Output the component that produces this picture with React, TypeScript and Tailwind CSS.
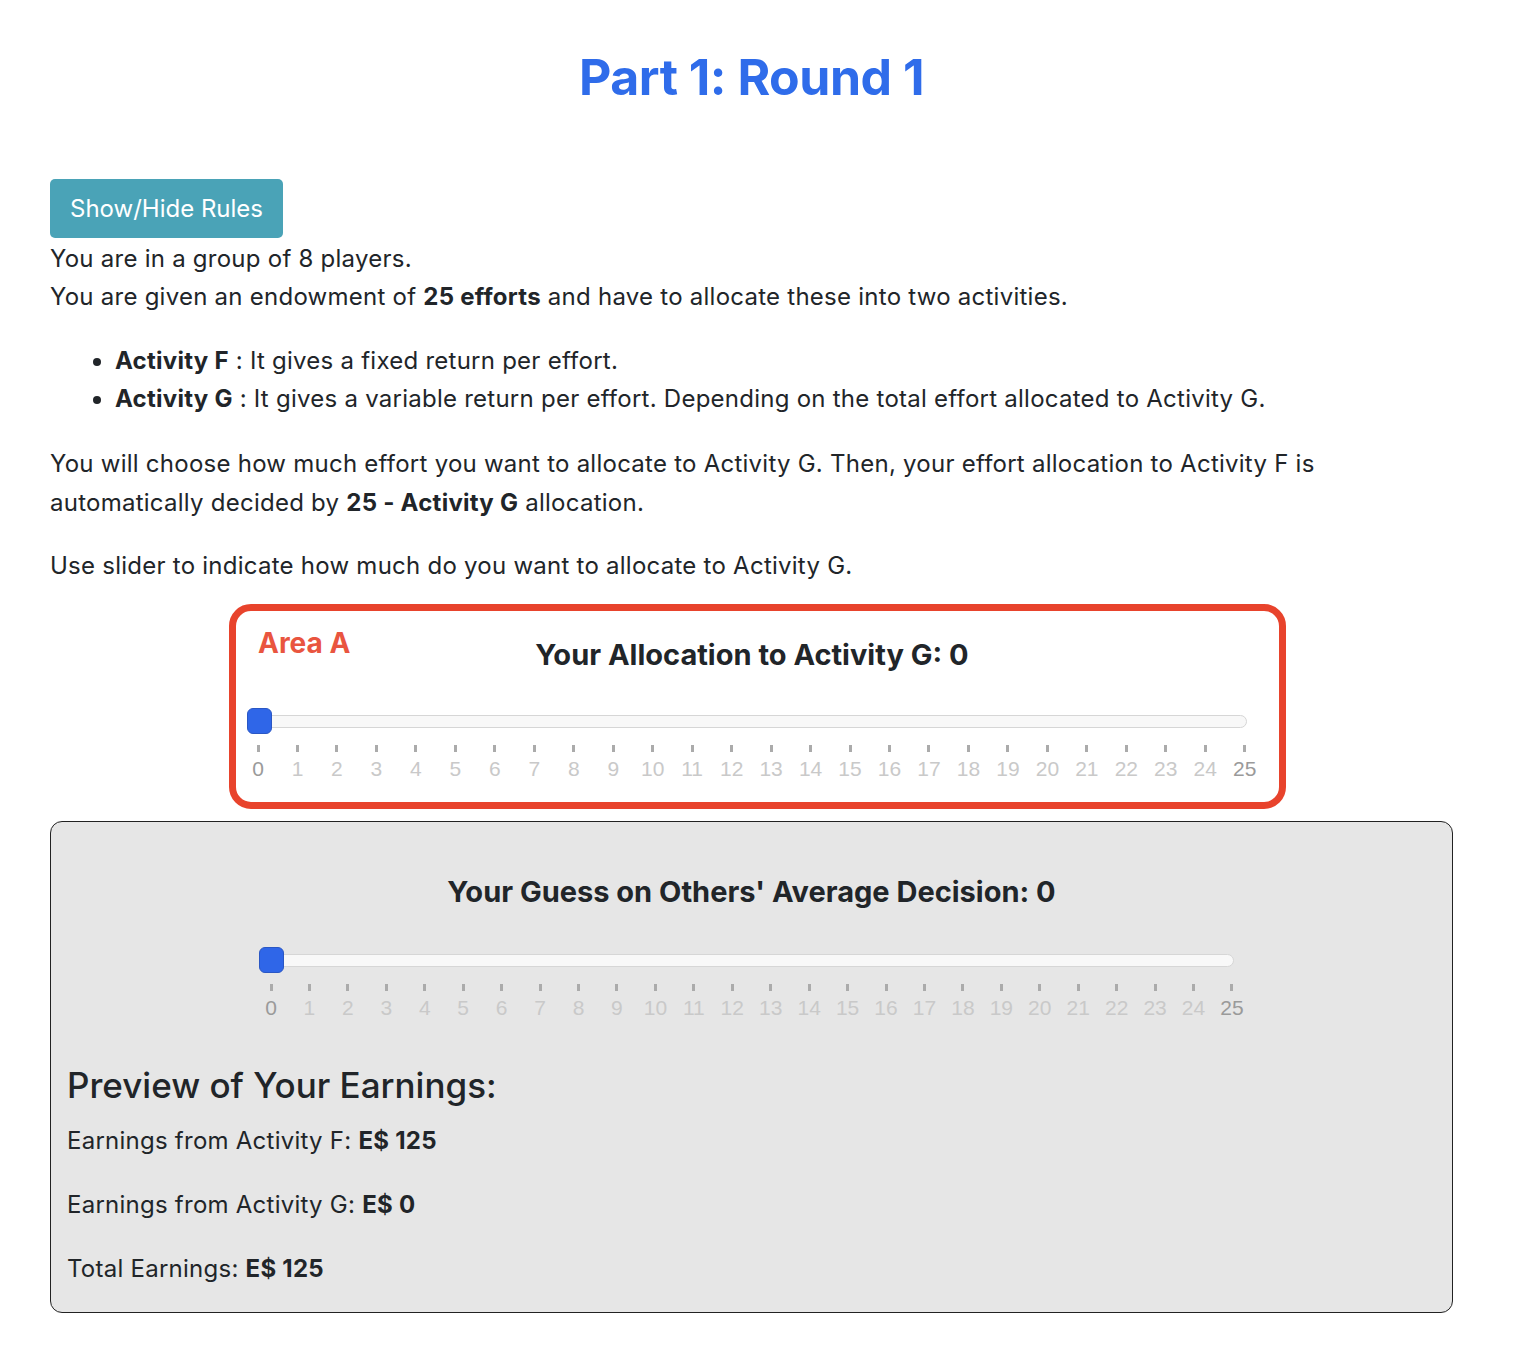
import React from "react";

const ticks = Array.from({ length: 26 }, (_, i) => i);

interface SliderProps {
  width: number;
  tickInsetLeft: number;
  tickInsetRight: number;
}

const Slider: React.FC<SliderProps> = ({ width, tickInsetLeft, tickInsetRight }) => {
  return (
    <div style={{ width }}>
      {/* track + thumb */}
      <div className="relative h-[26px] flex items-center">
        <div className="h-[13px] w-full rounded-full bg-[#f8f8f8] border border-[#d6d6d6]" />
        <div className="absolute left-0 top-0 h-[26px] w-[25px] rounded-[6px] bg-[#2f66e8] border border-[#2a57c4]" />
      </div>
      {/* tick marks */}
      <div
        className="flex justify-between mt-[11px]"
        style={{ paddingLeft: tickInsetLeft, paddingRight: tickInsetRight }}
      >
        {ticks.map((t) => (
          <div key={t} className="w-0 flex flex-col items-center">
            <div className="w-[3px] h-[7px] bg-[#ababab]" />
            <span
              className={
                "mt-[5px] text-[21px] leading-[24px] tracking-normal font-['Liberation_Sans',sans-serif] " +
                (t === 0 || t === 25 ? "text-[#9a9a9a]" : "text-[#c9c9c9]")
              }
            >
              {t}
            </span>
          </div>
        ))}
      </div>
    </div>
  );
};

export default function App() {
  return (
    <div className="min-h-[1358px] bg-white font-['Inter',sans-serif] text-[#212529] text-[24px] leading-[38px] tracking-[0.25px]">
      <div className="ml-[50px] w-[1403px] pt-[47px]">
        <h1 className="text-center text-[50px] leading-[60px] font-bold text-[#2f6cea] tracking-[-0.5px]">
          Part 1: Round 1
        </h1>

        <button className="mt-[72px] h-[59px] px-[20px] rounded-[5px] bg-[#4aa3b7] text-white text-[24px] leading-[30px] tracking-normal block">
          Show/Hide Rules
        </button>

        <p className="mt-[2px]">
          You are in a group of 8 players.
          <br />
          You are given an endowment of <b>25 efforts</b> and have to allocate these into two activities.
        </p>

        <ul className="mt-[26px] pl-[65px] list-disc">
          <li>
            <b>Activity F</b> : It gives a fixed return per effort.
          </li>
          <li>
            <b>Activity G</b> : It gives a variable return per effort. Depending on the total effort allocated
            to Activity G.
          </li>
        </ul>

        <p className="mt-[26px] leading-[39px]">
          You will choose how much effort you want to allocate to Activity G. Then, your effort allocation to
          Activity F is
          <br />
          automatically decided by <b>25 - Activity G</b> allocation.
        </p>

        <p className="mt-[25px]">Use slider to indicate how much do you want to allocate to Activity G.</p>

        {/* Area A */}
        <div className="relative mt-[19px] ml-[179px] w-[1057px] border-[7px] border-[#e8432c] rounded-[22px] pl-[11px] pt-[27px] pb-[21px]">
          <span className="absolute left-[22px] top-[15px] text-[28px] leading-[34px] font-bold text-[#e9553f] tracking-normal">
            Area A
          </span>
          <h3 className="text-center text-[29px] leading-[34px] font-bold pr-[22px] tracking-normal">
            Your Allocation to Activity G: 0
          </h3>
          <div className="mt-[36px]">
            <Slider width={1000} tickInsetLeft={11} tickInsetRight={2} />
          </div>
        </div>

        {/* gray panel */}
        <div className="mt-[12px] border border-[#222] rounded-[12px] bg-[#e6e6e6] px-[16px] pt-[53px] pb-[24px]">
          <h3 className="text-center text-[29px] leading-[34px] font-bold tracking-normal">
            Your Guess on Others' Average Decision: 0
          </h3>
          <div className="mt-[38px] ml-[192px]">
            <Slider width={975} tickInsetLeft={12} tickInsetRight={2} />
          </div>

          <h2 className="mt-[44px] text-[35px] leading-[43px] font-medium tracking-normal">
            Preview of Your Earnings:
          </h2>
          <p className="mt-[15px]">
            Earnings from Activity F: <b>E$ 125</b>
          </p>
          <p className="mt-[26px]">
            Earnings from Activity G: <b>E$ 0</b>
          </p>
          <p className="mt-[26px]">
            Total Earnings: <b>E$ 125</b>
          </p>
        </div>
      </div>
    </div>
  );
}
